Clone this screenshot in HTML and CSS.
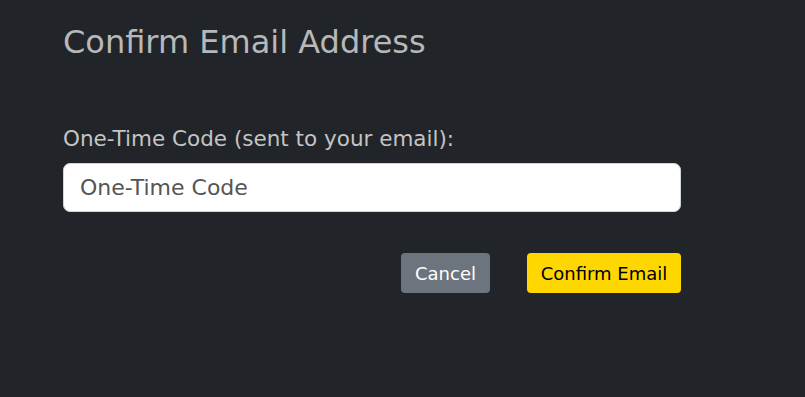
FILE: index.html
```html
<!DOCTYPE html>
<html lang="en">
<head>
<meta charset="utf-8">
<title>Confirm Email Address</title>
<link rel="stylesheet" href="styles.css">
</head>
<body>
<main class="panel">
  <h1 class="title">Confirm Email Address</h1>
  <form class="form">
    <label class="label" for="code">One-Time Code (sent to your email):</label>
    <input class="input" id="code" type="text" placeholder="One-Time Code">
    <div class="actions">
      <button type="button" class="btn btn-cancel">Cancel</button>
      <button type="submit" class="btn btn-confirm">Confirm Email</button>
    </div>
  </form>
</main>
</body>
</html>
```

FILE: styles.css
```css
html, body {
  margin: 0;
  padding: 0;
  background: #212529;
  height: 100%;
}
body {
  font-family: "DejaVu Sans", "Liberation Sans", sans-serif;
}
.panel {
  width: 618px;
  margin-left: 63px;
  padding-top: 21px;
}
.title {
  margin: 0;
  font-size: 32px;
  font-weight: 400;
  line-height: 42px;
  color: #b8b8b8;
}
.form {
  display: flex;
  flex-direction: column;
  margin-top: 62px;
}
.label {
  font-size: 21.5px;
  line-height: 28px;
  color: #c4c4c4;
  margin-bottom: 10px;
}
.input {
  box-sizing: border-box;
  height: 49px;
  width: 100%;
  border: 1px solid #ced4da;
  border-radius: 7px;
  background: #fff;
  padding: 0 16px;
  font-family: inherit;
  font-size: 22px;
  color: #333;
  outline: none;
}
.input::placeholder {
  color: #555;
}
.actions {
  display: flex;
  justify-content: flex-end;
  gap: 37px;
  margin-top: 41px;
}
.btn {
  height: 40px;
  border: none;
  border-radius: 4px;
  font-family: inherit;
  font-size: 18px;
  padding: 0 8px;
  cursor: pointer;
}
.btn-cancel {
  width: 89px;
  background: #6c757d;
  color: #fff;
}
.btn-confirm {
  width: 154px;
  background: #ffd700;
  color: #000;
}
```
